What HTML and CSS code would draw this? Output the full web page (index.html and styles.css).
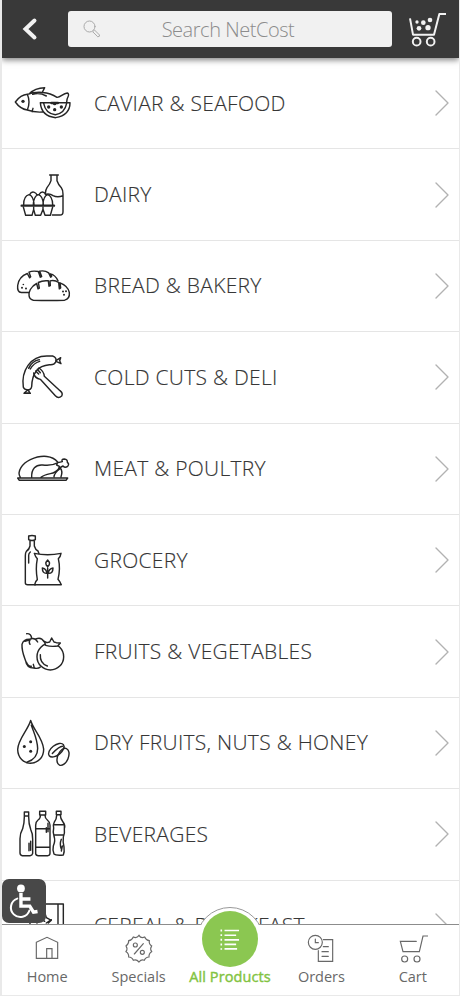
FILE: index.html
```
<!DOCTYPE html>
<html lang="en">
<head>
<meta charset="utf-8">
<title>NetCost</title>
<link rel="stylesheet" href="styles.css">
</head>
<body>
<div class="app">
  <header class="topbar">
    <svg class="back" viewBox="0 0 24 28"><path d="M17.500 5.500 8.500 14 17.500 22.500"/></svg>
    <div class="search">
      <svg class="magnifier" viewBox="0 0 20 20"><circle cx="7.500" cy="7.500" r="5.500"/><path d="M11 12.500 12.500 11 17.500 16q.6 1.600-1.300 1.800z"/></svg>
      <span>Search NetCost</span>
    </div>
    <svg class="top-cart" viewBox="535 32 120 108"><path class="frame" d="M541 54 550 103H613L629 41H649"/><circle class="frame" cx="561" cy="124" r="11.500"/><circle class="frame" cx="603" cy="124" r="11.500"/><g class="fill"><circle cx="562" cy="65" r="5"/><circle cx="581" cy="67" r="7"/><circle cx="601" cy="59" r="7"/><circle cx="568" cy="84" r="7"/><circle cx="595" cy="82" r="8"/></g></svg>
  </header>

  <main class="list">
    <a class="row"><svg class="icon" viewBox="30 -4 192 210"><path d="M46 98C58 82 68 76 82 75 110 65 145 67 171 84 182 85 188 72 202 71Q207 72 205 80 200 89 200 99M46 98C58 115 68 120 82 122 98 128 113 129 128 128M82 75Q92 98 82 122M87 74Q105 55 134 55L128 67M98 75Q119 69 139 80M96 127 99 117"/><path d="M121 100H210Q210 137 167 145 124 141 121 100ZM131 102Q137 133 166 136 194 132 200 102"/><path class="thick" d="M154 101H174"/><g class="fill"><circle cx="69" cy="96" r="5"/><circle cx="146" cy="113" r="5"/><circle cx="184" cy="113" r="5"/><circle cx="164" cy="121" r="5"/><circle cx="164" cy="103" r="5"/></g></svg><span class="name">CAVIAR &amp; SEAFOOD</span><svg class="chevron" viewBox="0 0 16 28"><path d="M2 2 14 14 2 26"/></svg></a>
    <a class="row"><svg class="icon" viewBox="30 270 192 210"><path d="M149 315H175M153 316V332Q150 342 141 353 137 359 136 370M171 316V332Q175 344 184 353 189 359 189 373V425Q189 435 180 435H157M136 373Q150 370 159 377 173 384 189 377"/><path d="M71 404Q71 378 87 374 101 378 102 404M100 404Q101 378 115 374 129 378 130 404M129 404Q130 378 143 374 157 378 158 404M89 374Q94 364 103 367 109 369 111 375M117 374Q123 364 131 367 137 370 139 375"/><path class="thick" d="M65 407H162"/><path d="M70 411 77 436H96L101 418 106 436H122L129 418 135 436H151L158 411M101 411V421M129 411V421"/></svg><span class="name">DAIRY</span><svg class="chevron" viewBox="0 0 16 28"><path d="M2 2 14 14 2 26"/></svg></a>
    <a class="row"><svg class="icon" viewBox="30 4.500 192 210"><path d="M87 129H64Q51 128 53 108C56 87 68 77 82 72L89 85 92 82 87 68Q97 63 115 66L121 83 125 81 119 65Q135 62 146 70L152 83 155 80 151 73Q166 76 174 94"/><path d="M100 152C84 150 85 131 91 120Q98 108 110 102L114 118 118 116 115 99Q128 92 145 94L147 110 151 108 150 94Q165 91 176 99L178 118 182 115 180 100Q204 109 208 129 210 148 194 152 148 154 100 152Z"/><g class="fill"><circle cx="70" cy="105" r="2.500"/><circle cx="66" cy="115" r="3"/><circle cx="78" cy="117" r="3"/><circle cx="189" cy="126" r="3"/><circle cx="198" cy="125" r="3"/><circle cx="192" cy="136" r="3"/></g></svg><span class="name">BREAD &amp; BAKERY</span><svg class="chevron" viewBox="0 0 16 28"><path d="M2 2 14 14 2 26"/></svg></a>
    <a class="row"><svg class="icon" viewBox="30 279 192 210"><path d="M70 415C63 367 90 319 144 321H158Q172 326 167 339 162 349 148 347C111 350 96 375 95 413Q93 423 83 423 73 422 70 415Z"/><path d="M86 358Q96 336 118 332M91 360Q101 342 119 337M168 335 182 326 179 335 183 344 168 337M83 423 72 433 82 432 91 433 84 423"/><path d="M101 372Q104 388 121 391L166 440Q175 450 185 441 190 433 180 425L133 382Q132 367 117 357M107 366 116 375M112 361 121 371"/></svg><span class="name">COLD CUTS &amp; DELI</span><svg class="chevron" viewBox="0 0 16 28"><path d="M2 2 14 14 2 26"/></svg></a>
    <a class="row"><svg class="icon" viewBox="30 13 192 210"><path d="M53 145H203L198 152H58ZM61 143C49 125 68 101 91 90 128 73 158 79 173 97M95 143C94 117 107 104 128 106 149 109 161 106 174 99L187 96Q183 88 193 88 203 89 202 98 209 103 203 110 195 116 189 109L178 115Q168 129 151 132 131 136 123 143M173 98 170 106 178 110 175 120M181 115Q189 125 183 141M179 118Q164 129 162 141"/></svg><span class="name">MEAT &amp; POULTRY</span><svg class="chevron" viewBox="0 0 16 28"><path d="M2 2 14 14 2 26"/></svg></a>
    <a class="row"><svg class="icon" viewBox="30 285 192 210"><path d="M86 318Q96 315 106 318V329Q96 334 86 329ZM90 332V348Q88 358 79 364 76 368 76 377V459Q76 464 83 464H106M103 332V348Q106 359 114 363L117 371M86 399V376Q86 370 91 366"/><path d="M103 370Q143 378 183 370 182 379 175 386 182 416 174 448 180 455 184 464H104Q105 455 112 449 106 416 112 386 106 380 103 370Z"/><path d="M143 444V414M143 410Q132 401 143 390 154 401 143 410M140 430Q127 431 127 414 140 416 140 430M145 430Q159 431 159 414 146 416 145 430"/></svg><span class="name">GROCERY</span><svg class="chevron" viewBox="0 0 16 28"><path d="M2 2 14 14 2 26"/></svg></a>
    <a class="row"><svg class="icon" viewBox="30 21 192 210"><path d="M80 71Q94 70 95 86M90 103Q85 96 91 87 105 82 113 96M91 88Q70 87 66 103C65 126 73 141 77 153 79 168 89 174 101 174 110 176 117 175 121 171M107 87Q124 80 132 95M75 94 87 90M79 156Q84 169 94 169M100 163 103 174"/><circle cx="151" cy="140" r="40"/><path d="M121 134Q119 160 142 168"/><path class="leaf" d="M133 94 141 98 149 96 155 84 162 96 169 98 181 99 173 108Q153 111 137 106Z"/></svg><span class="name">FRUITS &amp; VEGETABLES</span><svg class="chevron" viewBox="0 0 16 28"><path d="M2 2 14 14 2 26"/></svg></a>
    <a class="row"><svg class="icon" viewBox="30 295.500 192 210"><path d="M92 333C83 363 54 389 53 420 54 446 71 461 91 461 114 461 131 444 131 419 127 382 101 363 92 333ZM94 347C103 373 112 388 113 417 113 438 103 451 81 458"/><g class="fill"><circle cx="92" cy="397" r="4.500"/><circle cx="73" cy="411" r="4.500"/><circle cx="92" cy="425" r="4.500"/></g><ellipse cx="169" cy="422" rx="27" ry="15" transform="rotate(-38 169 422)"/><ellipse cx="189" cy="442" rx="16" ry="27" transform="rotate(23 189 442)"/><path d="M157 432Q177 410 188 410"/></svg><span class="name">DRY FRUITS, NUTS &amp; HONEY</span><svg class="chevron" viewBox="0 0 16 28"><path d="M2 2 14 14 2 26"/></svg></a>
    <a class="row"><svg class="icon" viewBox="30 30 192 210"><path d="M73 69H86V83Q86 105 92 121 98 132 98 151V193Q97 199 90 200H67Q60 199 60 192V149Q60 133 68 119 73 104 73 83ZM73 81H86M92 157V184M87 163V185"/><path d="M119 67H137V78H119ZM121 79Q122 87 114 93 107 98 107 109V194Q108 200 115 200H143Q150 200 150 193V109Q150 99 142 93 135 88 135 79M107 119H150M107 175H150M144 103V128M139 116V130"/><path d="M169 67H183V77H169ZM170 79Q170 90 163 99 158 108 161 117 158 128 162 142 167 155 160 171 157 183 162 195 167 200 190 198 194 189 192 174 188 159 190 144 195 132 193 119 197 109 189 99 181 89 181 79M161 107H193M161 138H192M184 151Q178 166 184 180M187 171 184 186"/></svg><span class="name">BEVERAGES</span><svg class="chevron" viewBox="0 0 16 28"><path d="M2 2 14 14 2 26"/></svg></a>
    <a class="row"><svg class="icon" viewBox="30 304 192 210"><path d="M90 343H190V470H90ZM174 343V470M134 368 139 384 154 392 145 400M139 400 154 390M98 384 111 400 122 386 134 395"/></svg><span class="name">CEREAL &amp; BREAKFAST</span><svg class="chevron" viewBox="0 0 16 28"><path d="M2 2 14 14 2 26"/></svg></a>
  </main>

  <button class="access" aria-label="Accessibility"><svg viewBox="6 267 130 130"><circle class="solid" cx="62" cy="295" r="11.500"/><path class="body" d="M62 308V347H88L99 365 111 363M62 326H90"/><path class="wheel" d="M51 325A28 28 0 1 0 87 360"/></svg></button>

  <nav class="tabs">
    <a class="tab"><svg viewBox="98 430 90 90"><path d="M111 458 143 443 175 458V506H111ZM142 506V477H158V506"/></svg><span>Home</span></a>
    <a class="tab"><svg viewBox="371 430 90 90"><path d="M416 437Q422 447 433 442 437 452 447 453 445 463 454 469 448 477 454 486 445 491 446 502 436 502 432 512 423 508 416 517 408 508 399 512 395 502 385 502 386 491 377 486 383 477 377 469 386 463 385 453 395 452 399 442 409 447 416 437ZM402 493 429 462"/><circle cx="405" cy="466" r="6"/><circle cx="426" cy="488" r="6"/></svg><span>Specials</span></a>
    <a class="tab active"><i class="halo"></i><i class="disc"><svg viewBox="0 0 62 64"><path d="M14 4H59M14 19H50M14 33H59M14 47H50M14 61H53"/><path class="dots" d="M4 1V64"/></svg></i><span>All Products</span></a>
    <a class="tab"><svg viewBox="49 184 90 90"><path d="M101 204H129V269H86V237M101 225H116M97 240H116M97 254H116M77 202V213H86"/><circle cx="77" cy="212" r="21"/></svg><span>Orders</span></a>
    <a class="tab"><svg viewBox="321 193 90 90"><path d="M376 218H328L336 249H385L396 202H410"/><circle cx="341" cy="271" r="9"/><circle cx="378" cy="271" r="9"/></svg><span>Cart</span></a>
  </nav>
</div>
</body>
</html>
```
FILE: styles.css
```
* { box-sizing: border-box; }
body { margin: 0; background: #e9e9e9; font-family: "Open Sans", "Noto Sans", sans-serif; font-weight: 300; }
svg { fill: none; stroke: currentColor; stroke-linecap: round; stroke-linejoin: round; display: block; flex: none; }
.app { position: relative; width: 457px; height: 995px; margin-left: 2px; background: #fff; overflow: hidden; display: flex; flex-direction: column; }

.topbar { height: 58px; flex: none; display: flex; align-items: center; background: #393939; color: #f2f2f2; box-shadow: 0 2px 6px rgba(0,0,0,.5); z-index: 1; }
.back { width: 24px; height: 28px; margin: 0 27px 0 15px; stroke-width: 4; stroke-linejoin: miter; }
.search { width: 324px; height: 36px; background: #f1f1f1; border-radius: 3px; color: #8c8c8c; font-size: 20px; display: flex; align-items: center; padding-left: 14px; }
.search span { flex: 1; text-align: center; line-height: 36px; padding: 2px 38px 0 0; letter-spacing: -.45px; }
.magnifier { width: 20px; height: 20px; color: #aaa; stroke-width: 1; }
.top-cart { width: 40px; height: 36px; margin-left: 16px; stroke-width: 6; }
.top-cart .frame { stroke-linecap: butt; }

.list { flex: 1; overflow: hidden; }
.row { height: 91.400px; display: flex; align-items: center; border-bottom: 1px solid #e5e5e5; padding: 0 9px 0 8px; }
.icon { width: 64px; height: 70px; color: #252525; stroke-width: 4.300; }
.leaf { fill: #fff; }
.fill { fill: currentColor; stroke: none; }
.thick { stroke-width: 7; }
.name { flex: 1; padding: 0 0 1px 20px; font-size: 21px; font-weight: 340; letter-spacing: .28px; color: #333; -webkit-text-stroke: .15px #444; white-space: nowrap; }
.chevron { width: 16px; height: 28px; color: #b2b2b2; stroke-width: 1.400; }

.tabs { height: 71px; flex: none; position: relative; display: flex; border-top: 1px solid #8c8c8c; background: #fff; }
.tab { flex: 1; position: relative; left: -.5px; display: flex; flex-direction: column; align-items: center; padding-top: 8px; font-size: 14.500px; font-weight: 400; color: #686868; white-space: nowrap; }
.tab svg { width: 30px; height: 30px; stroke-width: 3.500; stroke-linejoin: miter; }
.tab span { line-height: 20px; margin-top: 4px; }
.tab.active { color: #82c341; }
.halo { position: absolute; top: -18px; left: 50%; width: 68px; height: 68px; margin-left: -34px; border: 1px solid #999; border-radius: 50%; background: #fff; clip-path: inset(0 0 50px 0); }
.disc { position: absolute; top: -14px; left: 50%; width: 56px; height: 56px; margin-left: -28px; border-radius: 50%; background: #8bc751; color: #fff; display: flex; align-items: center; justify-content: center; }
.tab .disc svg { width: 20px; height: 21px; stroke-width: 5; stroke-linecap: butt; }
.disc .dots { stroke-dasharray: 6 8.500; }
.tab.active span { margin-top: 34px; letter-spacing: .1px; -webkit-text-stroke: .4px currentColor; }

.access { position: absolute; left: 0; top: 879px; width: 44px; height: 44px; padding: 0; border: 0; border-radius: 7px; background: #484848; color: #fff; }
.access svg { width: 44px; height: 44px; }
.access .solid { fill: currentColor; stroke: none; }
.access .body { stroke-width: 10; stroke-linejoin: miter; stroke-linecap: butt; }
.access .wheel { stroke-width: 6; }
```
